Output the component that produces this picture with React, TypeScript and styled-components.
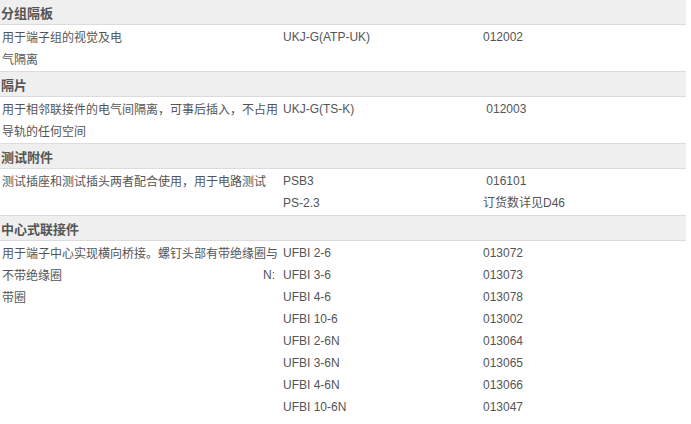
import React from "react";
import styled, { createGlobalStyle } from "styled-components";

const Global = createGlobalStyle`
  html, body { margin: 0; padding: 0; background: #fff; }
  body { font-family: "Liberation Sans", Arial, "Noto Sans CJK SC", sans-serif; color: #555; }
`;

const Table = styled.div`
  width: 686px;
  display: flex;
  flex-direction: column;
`;

const Header = styled.div`
  height: 24px;
  background: #efefef;
  border-bottom: 1px solid #dcdcdc;
  display: flex;
  align-items: center;
  padding-left: 1px;
  font-family: "Noto Sans CJK SC", sans-serif;
  font-size: 13px;
  font-weight: 700;
  color: #555;
`;

const Body = styled.div<{ $last?: boolean }>`
  display: grid;
  grid-template-columns: 281px 200px 1fr;
  padding: 1px 0 ${(p) => (p.$last ? "12px" : "1px")} 2px;
  border-bottom: 1px solid #dcdcdc;
  font-size: 12px;
  line-height: 22px;
`;

const Cell = styled.div<{ $cjk?: boolean }>`
  display: flex;
  flex-direction: column;
  font-family: ${(p) =>
    p.$cjk
      ? `"Noto Sans CJK SC", sans-serif`
      : `"Liberation Sans", Arial, "Noto Sans CJK SC", sans-serif`};
  white-space: pre;
`;

const Line = styled.div<{ $split?: boolean }>`
  height: 22px;
  display: flex;
  justify-content: ${(p) => (p.$split ? "space-between" : "flex-start")};
  padding-right: ${(p) => (p.$split ? "8px" : "0")};
`;

const Latin = styled.span`
  font-family: "Liberation Sans", Arial, sans-serif;
`;

type Section = {
  title: string;
  desc: (string | [string, string])[];
  models: string[];
  codes: string[];
};

const sections: Section[] = [
  {
    title: "分组隔板",
    desc: ["用于端子组的视觉及电", "气隔离"],
    models: ["UKJ-G(ATP-UK)"],
    codes: ["012002"],
  },
  {
    title: "隔片",
    desc: ["用于相邻联接件的电气间隔离，可事后插入，不占用", "导轨的任何空间"],
    models: ["UKJ-G(TS-K)"],
    codes: ["\u00a0012003"],
  },
  {
    title: "测试附件",
    desc: ["测试插座和测试插头两者配合使用，用于电路测试"],
    models: ["PSB3", "PS-2.3"],
    codes: ["\u00a0016101", "订货数详见D46"],
  },
  {
    title: "中心式联接件",
    desc: ["用于端子中心实现横向桥接。螺钉头部有带绝缘圈与", ["不带绝缘圈", "N:"], "带圈"],
    models: [
      "UFBI 2-6",
      "UFBI 3-6",
      "UFBI 4-6",
      "UFBI 10-6",
      "UFBI 2-6N",
      "UFBI 3-6N",
      "UFBI 4-6N",
      "UFBI 10-6N",
    ],
    codes: ["013072", "013073", "013078", "013002", "013064", "013065", "013066", "013047"],
  },
];

export default function App() {
  return (
    <>
      <Global />
      <Table>
        {sections.map((s, idx) => (
          <React.Fragment key={s.title}>
            <Header>{s.title}</Header>
            <Body $last={idx === sections.length - 1}>
              <Cell $cjk>
                {s.desc.map((d, i) =>
                  Array.isArray(d) ? (
                    <Line key={i} $split>
                      <span>{d[0]}</span>
                      <Latin>{d[1]}</Latin>
                    </Line>
                  ) : (
                    <Line key={i}>{d}</Line>
                  )
                )}
              </Cell>
              <Cell>
                {s.models.map((m) => (
                  <Line key={m}>{m}</Line>
                ))}
              </Cell>
              <Cell>
                {s.codes.map((c) => (
                  <Line key={c}>{c}</Line>
                ))}
              </Cell>
            </Body>
          </React.Fragment>
        ))}
      </Table>
    </>
  );
}
